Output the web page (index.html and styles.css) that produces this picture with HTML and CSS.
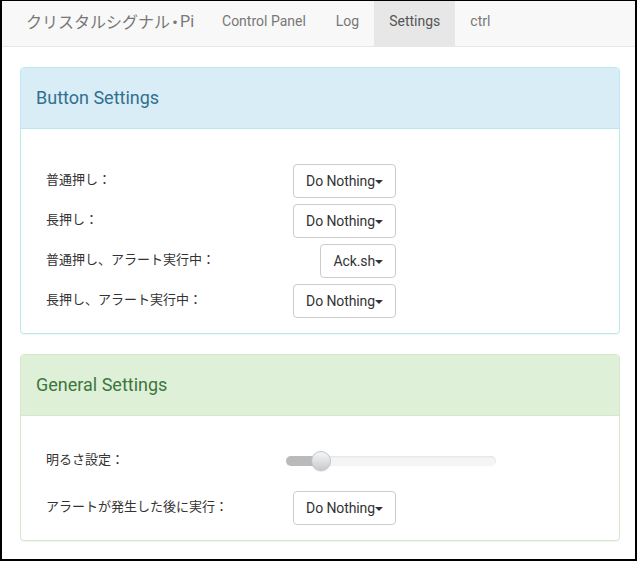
FILE: index.html
```html
<!DOCTYPE html>
<html lang="ja">
<head>
<meta charset="utf-8">
<title>Settings</title>
<link rel="stylesheet" href="styles.css">
</head>
<body>
<div class="frame">
  <nav class="navbar">
    <span class="brand">クリスタルシグナル<span class="dot">・</span>Pi</span>
    <ul class="nav">
      <li><a href="#">Control Panel</a></li>
      <li><a href="#">Log</a></li>
      <li class="active"><a href="#">Settings</a></li>
      <li><a href="#">ctrl</a></li>
    </ul>
  </nav>
  <main class="content">
    <section class="panel panel-info">
      <div class="panel-heading"><h3>Button Settings</h3></div>
      <div class="panel-body">
        <div class="row">
          <span class="label">普通押し：</span>
          <button class="btn">Do Nothing<span class="caret"></span></button>
        </div>
        <div class="row">
          <span class="label">長押し：</span>
          <button class="btn">Do Nothing<span class="caret"></span></button>
        </div>
        <div class="row">
          <span class="label">普通押し、アラート実行中：</span>
          <button class="btn">Ack.sh<span class="caret"></span></button>
        </div>
        <div class="row">
          <span class="label">長押し、アラート実行中：</span>
          <button class="btn">Do Nothing<span class="caret"></span></button>
        </div>
      </div>
    </section>
    <section class="panel panel-success">
      <div class="panel-heading"><h3>General Settings</h3></div>
      <div class="panel-body">
        <div class="row row-slider">
          <span class="label">明るさ設定：</span>
          <div class="slider">
            <div class="slider-fill" style="width: 35px"></div>
            <div class="slider-thumb" style="left: 25px"></div>
          </div>
        </div>
        <div class="row row-gap">
          <span class="label">アラートが発生した後に実行：</span>
          <button class="btn">Do Nothing<span class="caret"></span></button>
        </div>
      </div>
    </section>
  </main>
</div>
</body>
</html>
```
FILE: styles.css
```css
* { box-sizing: border-box; }
html, body { margin: 0; padding: 0; background: #fff; }
body {
  font-family: Roboto, "Noto Sans CJK JP", sans-serif;
  font-size: 14px;
  color: #333;
}
.frame {
  width: 637px;
  height: 561px;
  border-style: solid;
  border-color: #000;
  border-width: 1px 2px 2px 2px;
  overflow: hidden;
}
.navbar {
  display: flex;
  align-items: stretch;
  height: 46px;
  background: #f8f8f8;
  border-bottom: 1px solid #e7e7e7;
  padding-left: 24px;
}
.brand {
  display: flex;
  align-items: center;
  font-family: Roboto, "Noto Sans CJK JP", sans-serif;
  font-size: 16px;
  color: #777;
  padding-right: 13px;
  padding-bottom: 5px;
}
.brand .dot {
  font-feature-settings: "palt";
  margin: 0 1px;
}
.nav {
  display: flex;
  list-style: none;
  margin: 0;
  padding: 0;
}
.nav li { display: flex; }
.nav a {
  display: flex;
  align-items: center;
  padding: 0 15px 6px;
  color: #777;
  text-decoration: none;
}
.nav li.active a {
  background: #e7e7e7;
  color: #555;
}
.content {
  padding: 20px 15px 0 18px;
}
.panel {
  border: 1px solid;
  border-radius: 4px;
  margin-bottom: 20px;
  background: #fff;
  box-shadow: 0 1px 1px rgba(0,0,0,.05);
}
.panel-heading {
  height: 61px;
  display: flex;
  align-items: center;
  padding: 0 15px 2px;
  border-bottom: 1px solid;
  border-radius: 3px 3px 0 0;
}
.panel-heading h3 {
  margin: 0;
  font-size: 18px;
  font-weight: 400;
}
.panel-info { border-color: #bce8f1; }
.panel-info .panel-heading { background: #d9edf7; border-color: #bce8f1; color: #31708f; }
.panel-success { border-color: #d6e9c6; }
.panel-success .panel-heading { background: #dff0d8; border-color: #d6e9c6; color: #3c763d; }
.panel-body {
  padding: 35px 15px 15px;
  display: flex;
  flex-direction: column;
  gap: 6px;
}
.row {
  display: flex;
  align-items: center;
  width: 360px;
  padding-left: 10px;
}
.row-gap { margin-top: 14px; }
.label {
  flex: 1;
  font-family: Roboto, "Noto Sans CJK JP", sans-serif;
  font-size: 13px;
  line-height: 16px;
  color: #333;
  padding-bottom: 3px;
}
.btn {
  display: inline-flex;
  align-items: center;
  height: 34px;
  padding: 0 12px;
  font-family: Roboto, sans-serif;
  font-size: 14px;
  letter-spacing: -0.1px;
  color: #333;
  background: #fff;
  border: 1px solid #ccc;
  border-radius: 4px;
}
.caret {
  display: inline-block;
  width: 0;
  height: 0;
  border-top: 4px solid #333;
  border-left: 4px solid transparent;
  border-right: 4px solid transparent;
  margin-top: 1px;
}
.row.row-slider { width: auto; }
.row-slider .label { flex: 0 0 240px; }
.slider {
  position: relative;
  width: 210px;
  height: 20px;
}
.slider::before {
  content: "";
  position: absolute;
  left: 0; right: 0; top: 5px;
  height: 10px;
  border-radius: 5px;
  background: #f5f5f5;
  box-shadow: inset 0 1px 2px rgba(0,0,0,.08);
}
.slider-fill {
  position: absolute;
  left: 0; top: 5px;
  height: 10px;
  border-radius: 5px 0 0 5px;
  background: #bababa;
}
.slider-thumb {
  position: absolute;
  top: 0;
  width: 20px;
  height: 20px;
  border-radius: 50%;
  background: linear-gradient(#f7f7f7, #c9c9c9);
  border: 1px solid #b7c5d8;
  box-shadow: 0 1px 1px rgba(0,0,0,.1);
}
```
